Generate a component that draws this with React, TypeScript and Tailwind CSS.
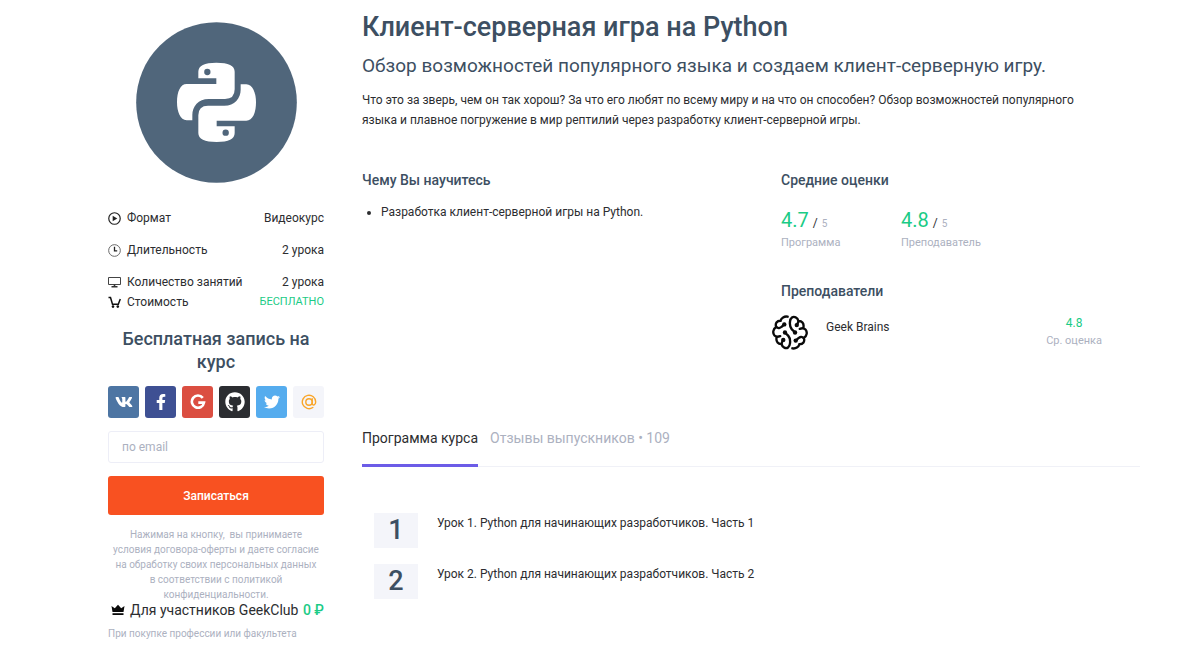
import type { ReactNode } from "react";
import { FaFacebookF, FaGithub, FaTwitter, FaVk } from "react-icons/fa";

function PythonLogo() {
  const half =
    "M259 205H205V185Q205 158 259 158Q314 158 314 185V238Q314 267 285 267H236C205 267 187 290 187 315V331H170C151 331 141 305 141 277C141 245 151 222 170 222H259Z";
  return (
    <svg viewBox="18 36 483 483" className="size-[161px]" role="img" aria-label="Python">
      <circle cx="259.500" cy="277.500" r="241" fill="#50667b" />
      <path d={half} fill="#fff" />
      <circle cx="232" cy="186" r="9.500" fill="#50667b" />
      <g transform="rotate(180 259.500 277)">
        <path d={half} fill="#fff" />
        <circle cx="232" cy="186" r="9.500" fill="#50667b" />
      </g>
    </svg>
  );
}

function BrainHalf() {
  return (
    <>
      <path d="M82 471C72 469 63 475 61 483C50 483 44 491 48 502C38 507 37 520 43 527C47 531 54 531 60 529M49 501C53 507 60 505 64 501L73 493" />
      <path d="M74 518L84 528C90 535 90 542 89 550C88 562 80 567 72 563C67 561 65 557 64 552C54 553 47 545 49 534M64 552C65 547 66 544 69 540" />
      <g fill="#0a0a0a" stroke="none">
        <circle cx="72" cy="494" r="6.500" />
        <circle cx="74" cy="518" r="6.500" />
        <circle cx="69" cy="540" r="6.500" />
      </g>
    </>
  );
}

function BrainLogo() {
  return (
    <svg viewBox="36 466 106 104" className="h-[35px] w-9" fill="none" stroke="#0a0a0a" strokeWidth="7" strokeLinecap="round" aria-hidden="true">
      <BrainHalf />
      <g transform="rotate(180 89 518)">
        <BrainHalf />
      </g>
    </svg>
  );
}

function PlayIcon() {
  return (
    <svg viewBox="0 0 12 12" className="size-[13px]" aria-hidden="true">
      <circle cx="6" cy="6" r="5.300" fill="none" stroke="#222" strokeWidth="1.100" />
      <path d="M4.300 3.400L8.600 6L4.300 8.600Z" fill="#222" />
    </svg>
  );
}

function ClockIcon() {
  return (
    <svg viewBox="0 0 12 12" className="size-[13px]" fill="none" aria-hidden="true">
      <circle cx="6" cy="6" r="5.400" stroke="#666" strokeWidth="0.900" />
      <path d="M6 2.500V6.300H8.500" stroke="#222" strokeWidth="1.200" />
    </svg>
  );
}

function MonitorIcon() {
  return (
    <svg viewBox="0 0 13 12" className="h-3 w-[13px]" fill="none" aria-hidden="true">
      <path d="M0.500 1.500H12.500V8.500H0.500Z" stroke="#444" />
      <path d="M6.500 8.500V10.500M3.500 10.800H9.500" stroke="#333" strokeWidth="1.600" />
    </svg>
  );
}

function CartIcon() {
  return (
    <svg viewBox="0 0 13 12" className="h-3 w-[13px]" fill="none" aria-hidden="true">
      <path d="M0.500 1.500H2.500L4.500 8.300H10.300L12.300 3" stroke="#111" strokeWidth="1.500" />
      <circle cx="5" cy="10.600" r="1.300" fill="#111" />
      <circle cx="9.800" cy="10.600" r="1.300" fill="#111" />
    </svg>
  );
}

function CrownIcon() {
  return (
    <svg viewBox="0 0 14 12" className="h-3 w-[14px]" fill="#0a0a0a" aria-hidden="true">
      <path d="M0.500 2L3.800 4.300L7 0.800L10.200 4.300L13.500 2L12.500 8H1.500Z" />
      <path d="M1.500 9.200H12.500V11H1.500Z" />
    </svg>
  );
}

function GoogleIcon() {
  return (
    <svg viewBox="0 0 16 16" className="size-4" fill="none" stroke="#fff" strokeWidth="2.600" aria-hidden="true">
      <path d="M12.800 3.900A6.100 6.100 0 1 0 14 8.600H8.300" />
    </svg>
  );
}

function MailruIcon() {
  return (
    <svg viewBox="0 0 16 16" className="size-4" fill="none" stroke="#f9a62b" strokeWidth="1.400" strokeLinecap="round" aria-hidden="true">
      <circle cx="8" cy="8" r="3.200" />
      <path d="M11.200 4.800V9.500C11.200 12 14.700 11.500 14.700 8A6.700 6.700 0 1 0 11.800 13.500" />
    </svg>
  );
}

const facts: { icon: ReactNode; label: string; value: string; className: string; free?: boolean }[] = [
  { icon: <PlayIcon />, label: "Формат", value: "Видеокурс", className: "mb-3" },
  { icon: <ClockIcon />, label: "Длительность", value: "2 урока", className: "mb-3" },
  { icon: <MonitorIcon />, label: "Количество занятий", value: "2 урока", className: "" },
  { icon: <CartIcon />, label: "Стоимость", value: "БЕСПЛАТНО", className: "", free: true },
];

const socials = [
  { name: "ВКонтакте", icon: <FaVk className="size-[18px]" />, className: "bg-[#4d75a3]" },
  { name: "Facebook", icon: <FaFacebookF className="size-4" />, className: "bg-[#3e5093]" },
  { name: "Google", icon: <GoogleIcon />, className: "bg-[#db4e41]" },
  { name: "GitHub", icon: <FaGithub className="size-5" />, className: "bg-[#2b2d31]" },
  { name: "Twitter", icon: <FaTwitter className="size-4" />, className: "bg-[#55acee]" },
  { name: "Mail.ru", icon: <MailruIcon />, className: "bg-[#f4f5fa]" },
];

function Sidebar() {
  return (
    <aside className="w-[216px] shrink-0 pt-[22px]">
      <div className="flex justify-center">
        <PythonLogo />
      </div>
      <dl className="mt-[25px] text-xs leading-5">
        {facts.map((f) => (
          <div key={f.label} className={`flex items-center justify-between ${f.className}`}>
            <dt className="flex items-center">
              <span className="flex w-[19px]">{f.icon}</span>
              {f.label}
            </dt>
            <dd className={f.free ? "text-[11px] text-[#1bcb86]" : ""}>{f.value}</dd>
          </div>
        ))}
      </dl>
      <h2 className="mt-[15px] text-center text-lg leading-[23px] font-medium text-[#3d4f62]">Бесплатная запись на курс</h2>
      <div className="mt-[13px] flex justify-between">
        {socials.map((s) => (
          <button key={s.name} type="button" aria-label={s.name} className={`flex h-8 w-[31px] items-center justify-center rounded-[3px] text-white ${s.className}`}>
            {s.icon}
          </button>
        ))}
      </div>
      <form onSubmit={(e) => e.preventDefault()}>
        <input type="email" aria-label="по email" placeholder="по email" className="mt-[13px] block h-8 w-full rounded-[3px] border border-[#edeef7] px-[13px] text-xs outline-none placeholder:text-[#acb1bf]" />
        <button type="submit" className="mt-[13px] block h-[39px] w-full rounded-[3px] bg-[#f85121] text-xs font-medium text-white">
          Записаться
        </button>
      </form>
      <p className="mt-3 text-center text-[10px] leading-[15px] text-[#acb1bf]">
        Нажимая на кнопку, &nbsp;вы принимаете
        <br />
        условия договора-оферты и даете согласие
        <br />
        на обработку своих персональных данных
        <br />в соответствии с политикой
        <br />
        конфиденциальности.
      </p>
      <div className="flex items-center pl-[3px] text-sm leading-4 whitespace-nowrap">
        <CrownIcon />
        <span className="ml-[5px]">Для участников GeekClub</span>
        <span className="ml-auto font-medium text-[#1bcb86]">0 ₽</span>
      </div>
      <p className="mt-2 text-[10px] leading-4 text-[#acb1bf]">При покупке профессии или факультета</p>
    </aside>
  );
}

function Rating({ value, label }: { value: string; label: string }) {
  return (
    <div className="w-[120px]">
      <p className="flex h-6 items-baseline gap-1 leading-5">
        <span className="text-xl leading-5 text-[#1bcb86]">{value}</span>
        <span className="text-xs">/</span>
        <span className="text-[10px] text-[#acb1bf]">5</span>
      </p>
      <p className="mt-px text-[11px] leading-4 text-[#acb1bf]">{label}</p>
    </div>
  );
}

const lessons = ["Урок 1. Python для начинающих разработчиков. Часть 1", "Урок 2. Python для начинающих разработчиков. Часть 2"];

export default function App() {
  return (
    <div className="flex gap-[38px] bg-white pr-[60px] pl-[108px] font-['Roboto',sans-serif] text-[#2c2d30]">
      <Sidebar />
      <main className="min-w-0 flex-1 pt-[9px]">
        <h1 className="text-[27px] leading-9 font-medium text-[#3d4f62]">Клиент-серверная игра на Python</h1>
        <p className="mt-2 text-[19px] leading-[26px] text-[#3d4f62]">Обзор возможностей популярного языка и создаем клиент-серверную игру.</p>
        <p className="mt-[11px] max-w-[740px] text-xs leading-5">
          Что это за зверь, чем он так хорош? За что его любят по всему миру и на что он способен? Обзор возможностей популярного языка и плавное погружение в мир рептилий через разработку клиент-серверной игры.
        </p>
        <div className="mt-10 flex">
          <section className="w-[419px] shrink-0">
            <h3 className="text-sm leading-5 font-medium text-[#3d4f62]">Чему Вы научитесь</h3>
            <ul className="mt-3 list-disc pl-[19px] text-xs leading-5">
              <li>Разработка клиент-серверной игры на Python.</li>
            </ul>
          </section>
          <section className="min-w-0 flex-1">
            <h3 className="text-sm leading-5 font-medium text-[#3d4f62]">Средние оценки</h3>
            <div className="mt-5 flex">
              <Rating value="4.7" label="Программа" />
              <Rating value="4.8" label="Преподаватель" />
            </div>
            <h3 className="mt-[30px] text-sm leading-5 font-medium text-[#3d4f62]">Преподаватели</h3>
            <div className="-ml-[9px] mt-3 flex items-start pr-[38px]">
              <div className="mt-[2px]">
                <BrainLogo />
              </div>
              <p className="mt-1 ml-[18px] text-xs leading-5">Geek Brains</p>
              <div className="ml-auto text-center">
                <p className="text-xs leading-5 text-[#1bcb86]">4.8</p>
                <p className="text-[11px] leading-4 text-[#acb1bf]">Ср. оценка</p>
              </div>
            </div>
          </section>
        </div>
        <div role="tablist" className="mt-[78px] flex border-b border-[#f0f1f7] text-sm leading-5">
          <button type="button" role="tab" aria-selected="true" className="-mb-px border-b-[3px] border-[#6c5ce7] pb-4">
            Программа курса
          </button>
          <button type="button" role="tab" aria-selected="false" className="-mb-px ml-3 border-b-[3px] border-transparent pb-4 text-[#acb1bf]">
            Отзывы выпускников • 109
          </button>
        </div>
        <ol className="mt-[46px] flex flex-col gap-4 pl-3">
          {lessons.map((title, i) => (
            <li key={title} className="flex">
              <span className="flex h-[35px] w-11 items-center justify-center bg-[#f4f5fa] text-[27px] font-medium text-[#3d4f62]">{i + 1}</span>
              <a href="#lesson" className="ml-[19px] text-xs leading-5">{title}</a>
            </li>
          ))}
        </ol>
      </main>
    </div>
  );
}
